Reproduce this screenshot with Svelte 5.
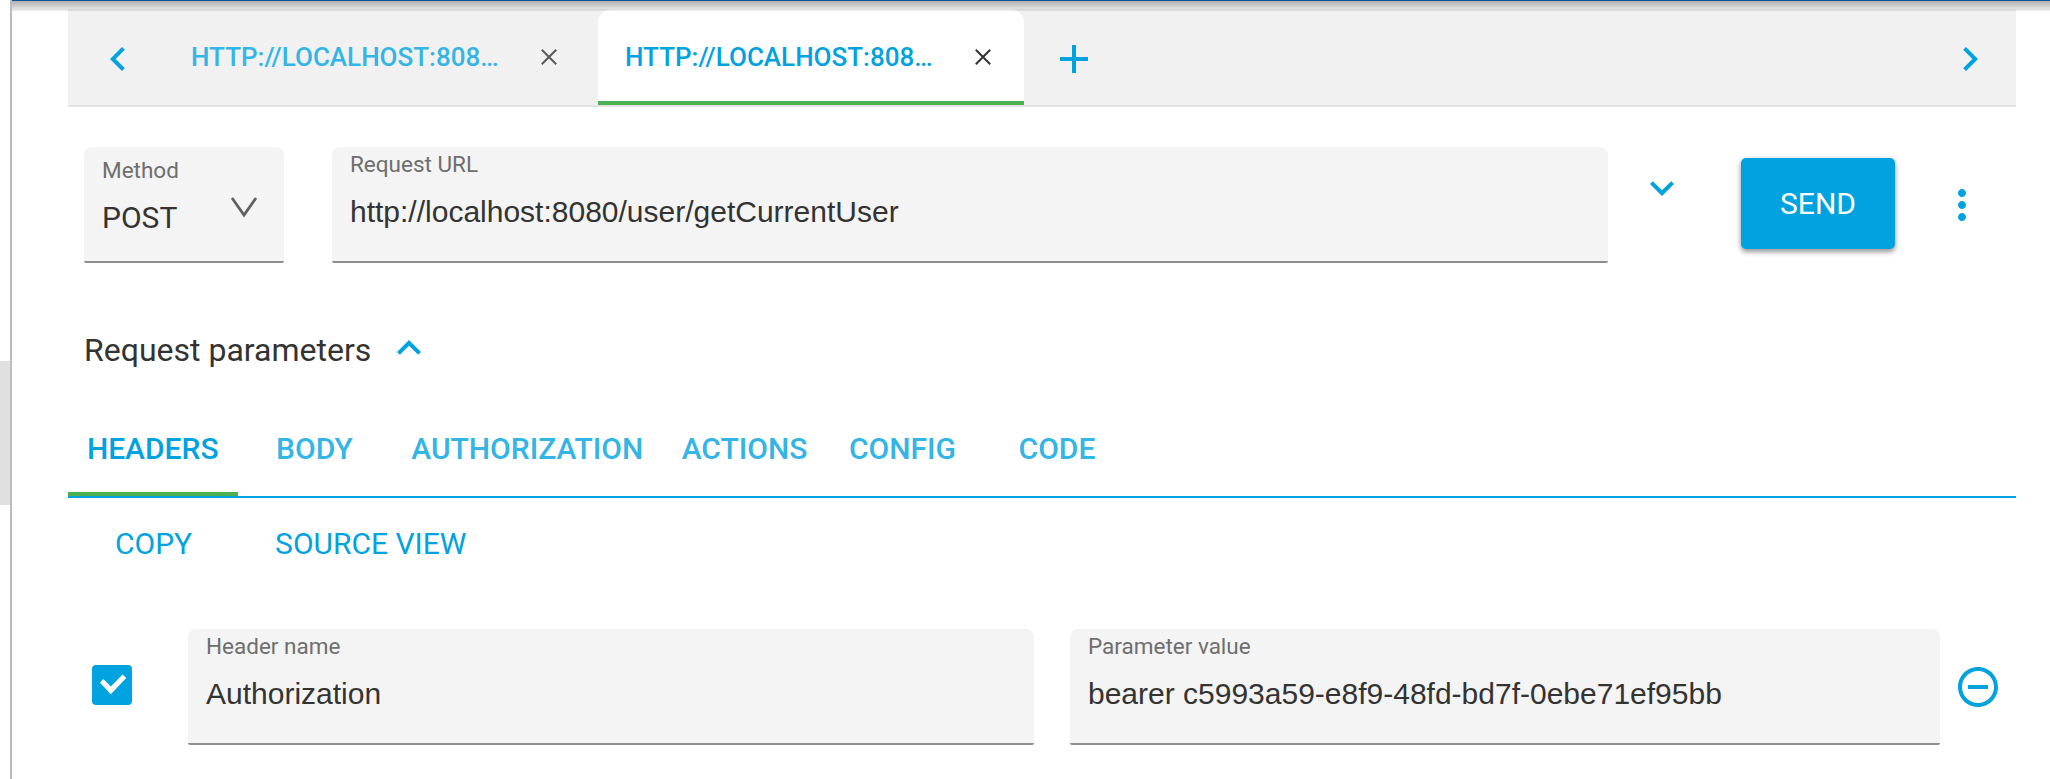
<script>
  const requests = [
    { title: 'HTTP://LOCALHOST:808…', active: false },
    { title: 'HTTP://LOCALHOST:808…', active: true }
  ];
  const sections = [
    { title: 'HEADERS', width: 169.5, active: true },
    { title: 'BODY', width: 154 },
    { title: 'AUTHORIZATION', width: 271.5 },
    { title: 'ACTIONS', width: 163 },
    { title: 'CONFIG', width: 153 },
    { title: 'CODE', width: 156 }
  ];
  const icons = {
    left: 'M15.41 7.41L14 6l-6 6 6 6 1.41-1.41L10.83 12z',
    right: 'M10 6L8.59 7.41 13.17 12l-4.58 4.59L10 18l6-6z',
    down: 'M16.59 8.59L12 13.17 7.41 8.59 6 10l6 6 6-6z',
    up: 'M12 8l-6 6 1.41 1.41L12 10.83l4.59 4.58L18 14z',
    add: 'M19 13h-6v6h-2v-6H5v-2h6V5h2v6h6v2z',
    more: 'M12 8c1.1 0 2-.9 2-2s-.9-2-2-2-2 .9-2 2 .9 2 2 2zm0 2c-1.1 0-2 .9-2 2s.9 2 2 2 2-.9 2-2-.9-2-2-2zm0 6c-1.1 0-2 .9-2 2s.9 2 2 2 2-.9 2-2-.9-2-2-2z',
    remove: 'M7 11v2h10v-2H7zm5-9C6.48 2 2 6.48 2 12s4.48 10 10 10 10-4.48 10-10S17.52 2 12 2zm0 18c-4.41 0-8-3.59-8-8s3.59-8 8-8 8 3.59 8 8-3.59 8-8 8z'
  };
</script>

{#snippet icon(name)}
  <svg class="icon" viewBox="0 0 24 24"><path d={icons[name]} /></svg>
{/snippet}

{#snippet field(label, value)}
  <div class="field">
    <div class="label">{label}</div>
    <div class="value">{value}</div>
  </div>
{/snippet}

<div class="app">
  <aside class="rail"><div class="thumb"></div></aside>
  <main>
    <div class="topshade"></div>
    <nav class="requests">
      <div class="prev">{@render icon('left')}</div>
      {#each requests as r}
        <div class="request" class:active={r.active}>
          <span>{r.title}</span>
          <svg class="close" viewBox="0 0 16 16"><path d="M.8 .8L15.2 15.2M15.2 .8L.8 15.2" /></svg>
        </div>
      {/each}
      <div class="add">{@render icon('add')}</div>
      <div class="next">{@render icon('right')}</div>
    </nav>

    <section class="urlrow">
      <div class="field method">
        <div>
          <div class="label">Method</div>
          <div class="value">POST</div>
        </div>
        <svg class="vee" viewBox="0 0 28 21"><path d="M2 1L14 18L26 1" /></svg>
      </div>
      {@render field('Request URL', 'http://localhost:8080/user/getCurrentUser')}
      <div class="history">{@render icon('down')}</div>
      <button class="send">SEND</button>
      <div class="more">{@render icon('more')}</div>
    </section>

    <div class="params">
      <span>Request parameters</span>
      {@render icon('up')}
    </div>

    <nav class="sections">
      {#each sections as s}
        <div class="section" class:active={s.active} style="width:{s.width}px">{s.title}</div>
      {/each}
    </nav>

    <div class="actions">
      <span>COPY</span>
      <span>SOURCE VIEW</span>
    </div>

    <section class="header">
      <svg class="check" viewBox="0 0 40 40">
        <rect width="40" height="40" rx="4" />
        <path d="M8 17.7L11.4 14L18.8 21.6L30.6 9.5L34.2 13L18.8 29.2Z" />
      </svg>
      {@render field('Header name', 'Authorization')}
      {@render field('Parameter value', 'bearer c5993a59-e8f9-48fd-bd7f-0ebe71ef95bb')}
      <div class="remove">{@render icon('remove')}</div>
    </section>
  </main>
</div>

<style>
  :global(body) {
    background: #fff;
    overflow: hidden;
  }
  .app {
    display: flex;
    height: 779px;
    font-family: Roboto, sans-serif;
    font-size: 30px;
    color: #333;
  }
  .rail {
    box-sizing: border-box;
    width: 12px;
    padding-top: 361px;
    border-right: 2px solid #bdbdbd;
  }
  .thumb {
    height: 144px;
    background: #e0e0e0;
  }
  main {
    position: relative;
    box-sizing: border-box;
    width: 2038px;
    padding: 9px 34px 0 56px;
  }
  .topshade {
    position: absolute;
    inset: 0 0 auto 0;
    height: 11px;
    z-index: 1;
    background:
      linear-gradient(#00549b, #00549b) 0 0 / 100% 1px no-repeat,
      linear-gradient(rgba(0, 0, 0, 0.31), rgba(0, 0, 0, 0.07)) 0 1px / 100% 10px no-repeat;
  }
  .icon {
    display: block;
    flex: none;
    width: 48px;
    height: 48px;
    fill: #00a2df;
  }

  .requests {
    display: flex;
    height: 96px;
    background: #f1f1f1;
    border-bottom: 2px solid #e3e3e3;
  }
  .prev {
    box-sizing: border-box;
    width: 96px;
    padding: 26px 0 0 26px;
  }
  .request {
    display: flex;
    box-sizing: border-box;
    width: 434px;
    height: 96px;
    padding: 0 41px 0 27px;
    justify-content: space-between;
    color: #33b5e5;
    font-size: 26px;
    font-weight: 500;
    line-height: 96px;
    white-space: nowrap;
  }
  .request.active {
    width: 426px;
    padding-right: 33px;
    background: #fff;
    border-bottom: 4px solid #4caf50;
    border-radius: 14px 14px 0 0;
    color: #00a2df;
  }
  .close {
    width: 16px;
    height: 16px;
    margin-top: 40px;
    fill: none;
    stroke: #5a5a5a;
    stroke-width: 2;
  }
  .active .close {
    stroke: #333;
  }
  .add {
    padding: 26px 0 0 26px;
  }
  .next {
    margin-left: auto;
    padding: 26px 22px 0 0;
  }

  .urlrow {
    display: flex;
    height: 116px;
    margin: 40px 0 0 16px;
  }
  .field {
    box-sizing: border-box;
    height: 116px;
    padding: 7px 18px 0;
    background: #f4f4f4;
    border-bottom: 2px solid #8e8e8e;
    border-radius: 8px 8px 2px 2px;
    white-space: nowrap;
  }
  .label {
    color: #6e6e6e;
    font-size: 22.5px;
    line-height: 20px;
  }
  .value {
    margin-top: 18px;
    font-family: 'Liberation Sans', Arial, sans-serif;
    line-height: 40px;
  }
  .method {
    display: flex;
    width: 200px;
    padding-top: 13px;
  }
  .method .value {
    font-family: Roboto, sans-serif;
  }
  .vee {
    width: 28px;
    height: 21px;
    margin: 37px 0 0 51px;
    fill: none;
    stroke: #616161;
    stroke-width: 2.8;
  }
  .urlrow .field:nth-child(2) {
    width: 1275.5px;
    margin-left: 48px;
  }
  .history {
    margin: 16.5px 0 0 30.5px;
  }
  .send {
    width: 154px;
    height: 91px;
    margin: 11px 0 0 55px;
    padding: 0 0 2px;
    border: 0;
    border-radius: 5px;
    background: #00a2df;
    box-shadow: 0 3px 5px rgba(0, 0, 0, 0.36), 0 1px 8px rgba(0, 0, 0, 0.1);
    color: #fff;
    font: 400 30px/91px Roboto, sans-serif;
  }
  .more {
    margin: 34px 0 0 43px;
  }

  .params {
    display: flex;
    gap: 14px;
    margin: 61px 0 0 16px;
    font-size: 32px;
    line-height: 52px;
  }

  .sections {
    display: flex;
    box-sizing: border-box;
    height: 96px;
    margin-top: 26px;
    border-bottom: 2px solid #00a2df;
  }
  .section {
    box-sizing: border-box;
    height: 94px;
    padding-top: 6px;
    color: #33b5e5;
    font-weight: 500;
    line-height: 82px;
    text-align: center;
  }
  .section.active {
    border-bottom: 4px solid #4caf50;
    color: #00a2df;
  }

  .actions {
    display: flex;
    gap: 83px;
    margin: 18px 0 0 47px;
    color: #00a2df;
    line-height: 56px;
  }

  .header {
    display: flex;
    margin: 57px 0 0 24px;
  }
  .check {
    width: 40px;
    height: 40px;
    margin: 36px 56px 0 0;
    fill: #fff;
  }
  .check rect {
    fill: #00a2df;
  }
  .header .field {
    width: 846px;
  }
  .header .field:nth-child(3) {
    width: 870px;
    margin-left: 36px;
  }
  .remove {
    margin: 34px 0 0 14px;
  }
</style>
